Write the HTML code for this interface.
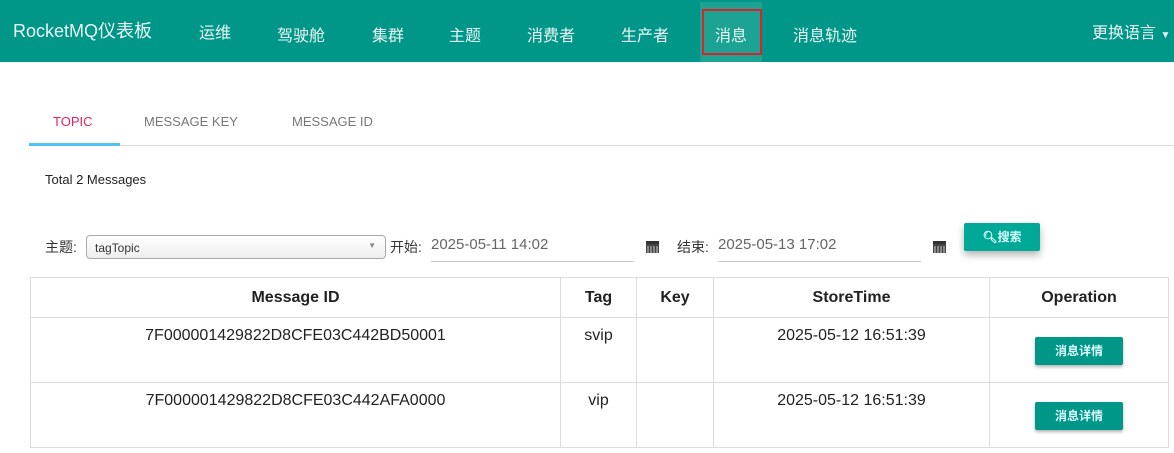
<!DOCTYPE html>
<html><head><meta charset="utf-8"><style>
*{margin:0;padding:0;box-sizing:border-box}
body{width:1174px;height:453px;background:#fff;font-family:"Liberation Sans","Noto Sans CJK SC",sans-serif;position:relative;overflow:hidden;color:#333}
.a{position:absolute;white-space:nowrap}
.hdr{position:absolute;left:0;top:0;width:1174px;height:62px;background:#009688}
.nv{color:#e8f5f3;font-size:16px}
table{position:absolute;left:30px;top:277px;border-collapse:collapse;width:1139px}
td,th{border:1px solid #ddd;text-align:center;font-size:16px;color:#222}
th{height:40px;font-weight:bold}
td{height:65px;vertical-align:top;padding-top:9px}
.btn{display:inline-block;background:#009688;color:#dff;font-size:12px;font-weight:bold;width:88px;height:28px;line-height:28px;border-radius:2px;box-shadow:0 2px 3px rgba(0,0,0,.3);margin-top:10px}
.cal{position:absolute;width:13px;height:12px;background:#444;border-top:3px solid #333}
.cal:after{content:"";position:absolute;left:1px;top:2px;width:11px;height:7px;background:repeating-linear-gradient(90deg,#888 0 2px,#444 2px 3px)}
</style></head><body>
<div class="hdr"></div>
<div class="a" style="left:700px;top:2px;width:62px;height:60px;background:#1ca393"></div>
<div class="a" style="left:702px;top:9px;width:60px;height:46px;border:2px solid #e0202a"></div>
<div class="a nv" style="left:13px;top:17px;font-size:18px">RocketMQ仪表板</div>
<div class="a nv" style="left:199px;top:19px">运维</div>
<div class="a nv" style="left:277px;top:22px">驾驶舱</div>
<div class="a nv" style="left:372px;top:22px">集群</div>
<div class="a nv" style="left:449px;top:22px">主题</div>
<div class="a nv" style="left:527px;top:22px">消费者</div>
<div class="a nv" style="left:621px;top:22px">生产者</div>
<div class="a nv" style="left:715px;top:22px">消息</div>
<div class="a nv" style="left:793px;top:22px">消息轨迹</div>
<div class="a nv" style="left:1092px;top:19px">更换语言 <span style="font-size:10px">▼</span></div>

<div class="a" style="left:53px;top:114px;font-size:13px;color:#e91e63">TOPIC</div>
<div class="a" style="left:144px;top:114px;font-size:13px;color:#777">MESSAGE KEY</div>
<div class="a" style="left:292px;top:114px;font-size:13px;color:#777">MESSAGE ID</div>
<div class="a" style="left:29px;top:145px;width:1145px;height:1px;background:#ddd"></div>
<div class="a" style="left:29px;top:143px;width:91px;height:3px;background:#4fc3f7"></div>

<div class="a" style="left:45px;top:172px;font-size:13px;color:#222">Total 2 Messages</div>

<div class="a" style="left:45px;top:237px;font-size:14px">主题:</div>
<div class="a" style="left:86px;top:235px;width:300px;height:24px;border:1px solid #aaa;border-radius:4px;background:linear-gradient(#fff,#eee);font-size:12px;padding:5px 0 0 8px;color:#333">tagTopic<span style="position:absolute;right:9px;top:5px;font-size:8px;color:#888">▼</span></div>
<div class="a" style="left:390px;top:237px;font-size:14px">开始:</div>
<div class="a" style="left:431px;top:236px;font-size:15px;color:#666">2025-05-11 14:02</div>
<div class="a" style="left:431px;top:261px;width:203px;height:1px;background:#ccc"></div>
<div class="cal" style="left:646px;top:241px"></div>
<div class="a" style="left:677px;top:237px;font-size:14px">结束:</div>
<div class="a" style="left:718px;top:236px;font-size:15px;color:#666">2025-05-13 17:02</div>
<div class="a" style="left:718px;top:261px;width:203px;height:1px;background:#ccc"></div>
<div class="cal" style="left:933px;top:241px"></div>
<div class="a" style="left:964px;top:223px;width:76px;height:28px;background:#00a897;border-radius:2px;box-shadow:0 4px 8px rgba(0,0,0,.3);color:#dff;font-size:12px;font-weight:bold;text-align:center;line-height:28px">&#x1F50D;&#xFE0E;搜索</div>

<table>
<tr><th style="width:530px">Message ID</th><th style="width:76px">Tag</th><th style="width:77px">Key</th><th style="width:276px">StoreTime</th><th>Operation</th></tr>
<tr><td>7F000001429822D8CFE03C442BD50001</td><td>svip</td><td></td><td>2025-05-12 16:51:39</td><td><span class="btn">消息详情</span></td></tr>
<tr><td>7F000001429822D8CFE03C442AFA0000</td><td>vip</td><td></td><td>2025-05-12 16:51:39</td><td><span class="btn">消息详情</span></td></tr>
</table>
</body></html>
